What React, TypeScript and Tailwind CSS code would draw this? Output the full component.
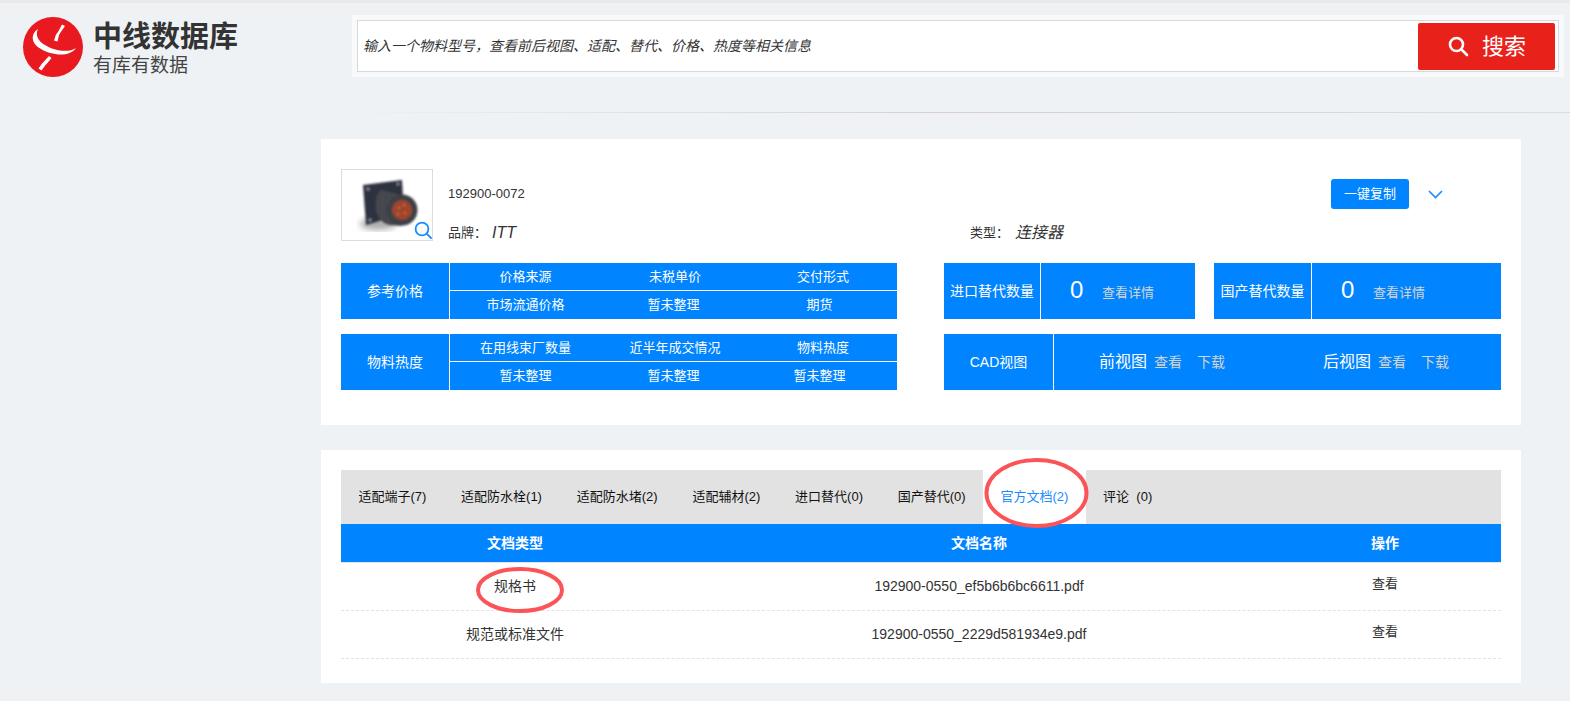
const blueCell = "flex items-center justify-center text-white";

function Logo() {
  return (
    <svg width="60" height="60" viewBox="0 0 60 60" className="shrink-0">
      <circle cx="30" cy="30" r="30" fill="#e8191f" />
      <path d="M15 12 C7 17 8 27 18 32 C28 38 46 41 53 31 C46 36 31 34 22 28 C15 24 12 18 15 12 Z" fill="#fff" />
      <path d="M39 7.5 L42 9 L37.5 15.5 L36 18 L34.5 24.5 L31 23.5 L33 17.5 L35 15 Z" fill="#fff" />
      <path d="M26 39 L28.5 41 L24 46.5 L22.5 48 L18.5 53.5 L15.5 51.5 L19 46.5 L21 44.5 Z" fill="#fff" />
    </svg>
  );
}

function Connector() {
  return (
    <svg width="90" height="70" viewBox="0 0 90 70">
      <defs>
        <filter id="soft">
          <feGaussianBlur stdDeviation="0.8" />
        </filter>
        <filter id="shade">
          <feGaussianBlur stdDeviation="3" />
        </filter>
      </defs>
      <ellipse cx="36" cy="54" rx="18" ry="6" fill="#aaa" filter="url(#shade)" />
      <g filter="url(#soft)">
        <path d="M21 15 L60 10 L62 44 L24 55 Z" fill="#2d3240" />
        <circle cx="26" cy="19" r="1.6" fill="#8a8d92" />
        <circle cx="56" cy="14" r="1.4" fill="#8a8d92" />
        <circle cx="28" cy="50" r="1.6" fill="#8a8d92" />
        <path d="M39 20 L62 26 L60 56 L47 55 C38 52 34 46 34 36 C34 28 35 23 39 20 Z" fill="#47494f" />
        <path d="M39 22 L37 48 M44 23 L43 52 M49 24 L49 55" stroke="#3d4046" strokeWidth="1" />
        <circle cx="60" cy="40" r="15.5" fill="#3e4047" />
        <circle cx="60" cy="40" r="10" fill="#a0452b" />
        <circle cx="57" cy="38" r="1.1" fill="#c87a60" />
        <circle cx="63" cy="43" r="1.1" fill="#c87a60" />
        <circle cx="62" cy="35" r="1.1" fill="#c87a60" />
        <circle cx="56" cy="44" r="1.1" fill="#c87a60" />
      </g>
    </svg>
  );
}

function SplitTable({ label, top, bottom }: { label: string; top: string[]; bottom: string[] }) {
  return (
    <div className="flex h-14 bg-[#0084ff] text-[13px]">
      <div className={`${blueCell} w-[109px] border-r border-white text-[14px]`}>{label}</div>
      <div className="flex flex-col flex-1">
        <div className="grid grid-cols-[151px_148px_1fr] h-[28px] border-b border-white">
          {top.map((t) => (
            <div key={t} className={blueCell}>{t}</div>
          ))}
        </div>
        <div className="grid grid-cols-[151px_145px_1fr] flex-1 pr-[4px]">
          {bottom.map((t, i) => (
            <div key={i} className={blueCell}>{t}</div>
          ))}
        </div>
      </div>
    </div>
  );
}

function CountBox({ label, labelW, w, pad }: { label: string; labelW: string; w: string; pad: string }) {
  return (
    <div className={`flex h-14 bg-[#0084ff] ${w}`}>
      <div className={`${blueCell} ${labelW} border-r border-white text-[14px] shrink-0`}>{label}</div>
      <div className={`flex items-center ${pad} text-white`}>
        <span className="text-[24px] w-[31px] leading-none pb-[3px]">0</span>
        <span className="text-[13px] text-[#d4d4d4] ml-[1px] pt-[3px]">查看详情</span>
      </div>
    </div>
  );
}

const tabs = ["适配端子(7)", "适配防水栓(1)", "适配防水堵(2)", "适配辅材(2)", "进口替代(0)", "国产替代(0)", "官方文档(2)", "评论\u00a0\u00a0(0)"];

const docs = [
  { type: "规格书", name: "192900-0550_ef5b6b6bc6611.pdf" },
  { type: "规范或标准文件", name: "192900-0550_2229d581934e9.pdf" },
];

export default function App() {
  return (
    <div className="relative min-h-[701px] overflow-hidden bg-[#eff2f5] text-[#333] font-['Liberation_Sans','Noto_Sans_CJK_SC',sans-serif]">
      <div className="h-[3px] bg-[#e9e9e9]" />

      <header className="flex h-[109px]">
        <div className="flex w-[352px] pl-[23px] pt-[14px] shrink-0">
          <Logo />
          <div className="ml-[10px] pt-[2px]">
            <div className="text-[29px] font-bold leading-[36px] text-[#333]">中线数据库</div>
            <div className="text-[19px] leading-[22px] text-[#444]">有库有数据</div>
          </div>
        </div>
        <div className="mt-[12px] w-[1212px] h-[62px] bg-[#f8f9fa] p-[5px]">
          <div className="flex items-center justify-between h-full bg-white border border-[#d9d9d9] pl-[5px] pr-[3px]">
            <span className="text-[14px] italic text-[#333]">输入一个物料型号，查看前后视图、适配、替代、价格、热度等相关信息</span>
            <button className="flex items-center justify-center gap-[13px] w-[137px] h-[47px] bg-[#e8221a] rounded-[2px] text-white text-[22px]">
              <svg width="22" height="22" viewBox="0 0 22 22" fill="none" stroke="#fff" strokeWidth="2.6">
                <circle cx="9.5" cy="9.5" r="6.5" />
                <path d="M14.5 14.5 L20 20" strokeLinecap="round" />
              </svg>
              <span>搜索</span>
            </button>
          </div>
        </div>
      </header>

      <div className="ml-[321px] h-px bg-gradient-to-r from-[#eff2f5] via-[#d9cfcf] to-[#dddddd]" />

      <main className="ml-[321px] w-[1200px] mt-[26px] flex flex-col gap-[25px]">
        <section className="bg-white px-[20px] pt-[30px] pb-[35px]">
          <div className="flex h-[72px]">
            <div className="relative w-[92px] h-[72px] border border-[#dcdcdc] shrink-0">
              <Connector />
              <svg width="18" height="18" viewBox="0 0 18 18" fill="none" stroke="#1a8cff" strokeWidth="1.8" className="absolute right-0 bottom-[1px]">
                <circle cx="8" cy="8" r="6.4" />
                <path d="M12.6 12.6 L17 17" strokeLinecap="round" />
              </svg>
            </div>
            <div className="flex flex-col flex-1 ml-[15px] pt-[10px]">
              <div className="flex items-center justify-between h-[30px] pr-[58px]">
                <span className="text-[13px] text-[#333]">192900-0072</span>
                <div className="flex items-center gap-[19px]">
                  <button className="w-[78px] h-[30px] rounded-[3px] bg-[#0084ff] text-white text-[13px]">一键复制</button>
                  <svg width="15" height="9" viewBox="0 0 15 9" fill="none" stroke="#1a8cff" strokeWidth="1.6">
                    <path d="M1 1 L7.5 7.5 L14 1" />
                  </svg>
                </div>
              </div>
              <div className="flex items-center mt-[12px] h-[24px]">
                <div className="flex items-center w-[522px]">
                  <span className="text-[13px] w-[44px]">品牌：</span>
                  <span className="text-[16px] italic">ITT</span>
                </div>
                <div className="flex items-center">
                  <span className="text-[13px] w-[45px]">类型：</span>
                  <span className="text-[16px] italic">连接器</span>
                </div>
              </div>
            </div>
          </div>

          <div className="grid grid-cols-[556px_557px] gap-x-[47px] gap-y-[15px] mt-[22px]">
            <SplitTable label="参考价格" top={["价格来源", "未税单价", "交付形式"]} bottom={["市场流通价格", "暂未整理", "期货"]} />
            <div className="flex justify-between">
              <CountBox label="进口替代数量" labelW="w-[97px]" w="w-[251px]" pad="pl-[29px]" />
              <CountBox label="国产替代数量" labelW="w-[98px]" w="w-[287px]" pad="pl-[29px]" />
            </div>
            <SplitTable label="物料热度" top={["在用线束厂数量", "近半年成交情况", "物料热度"]} bottom={["暂未整理", "暂未整理", "暂未整理"]} />
            <div className="flex h-14 bg-[#0084ff]">
              <div className={`${blueCell} w-[110px] border-r border-white text-[14px] shrink-0`}>CAD视图</div>
              <div className="flex flex-1 items-center pl-[45px] text-white">
                <div className="flex items-center w-[224px]">
                  <span className="text-[16px]">前视图</span>
                  <span className="text-[14px] text-[#d4d4d4] ml-[7px]">查看</span>
                  <span className="text-[14px] text-[#d4d4d4] ml-[15px]">下载</span>
                </div>
                <div className="flex items-center">
                  <span className="text-[16px]">后视图</span>
                  <span className="text-[14px] text-[#d4d4d4] ml-[7px]">查看</span>
                  <span className="text-[14px] text-[#d4d4d4] ml-[15px]">下载</span>
                </div>
              </div>
            </div>
          </div>
        </section>

        <section className="relative bg-white px-[20px] pt-[20px] pb-[24px]">
          <nav className="flex h-[54px] bg-[#e2e2e2] text-[13px] text-[#111]">
            {tabs.map((t) => (
              <div
                key={t}
                className={
                  t.startsWith("官方")
                    ? "flex items-center px-[17.4px] bg-white text-[#1a8cff]"
                    : "flex items-center px-[17.4px]"
                }
              >
                {t}
              </div>
            ))}
          </nav>
          <div className="grid grid-cols-[30%_50%_20%] h-[39px] bg-[#0084ff] text-white text-[14px] font-bold border-b border-[#e6e6e6]">
            <div className="flex items-center justify-center">文档类型</div>
            <div className="flex items-center justify-center">文档名称</div>
            <div className="flex items-center justify-center">操作</div>
          </div>
          {docs.map((d) => (
            <div key={d.name} className="grid grid-cols-[30%_50%_20%] h-[48px] border-b border-dashed border-[#e2e2e2] text-[14px] text-[#333]">
              <div className="flex items-center justify-center">{d.type}</div>
              <div className="flex items-center justify-center">{d.name}</div>
              <div className="flex items-center justify-center pb-[6px] text-[13px]">查看</div>
            </div>
          ))}
          {/* hand drawn red marks on top of the screenshot */}
          <svg width="108" height="74" viewBox="0 0 108 74" fill="none" className="absolute left-[662px] top-[6px]">
            <ellipse cx="53.5" cy="37" rx="50" ry="33" stroke="#fb5458" strokeWidth="4" />
          </svg>
          <svg width="92" height="50" viewBox="0 0 92 50" fill="none" className="absolute left-[153px] top-[115px]">
            <ellipse cx="46" cy="25" rx="42" ry="21" stroke="#fb5458" strokeWidth="4" />
          </svg>
        </section>
      </main>
    </div>
  );
}
